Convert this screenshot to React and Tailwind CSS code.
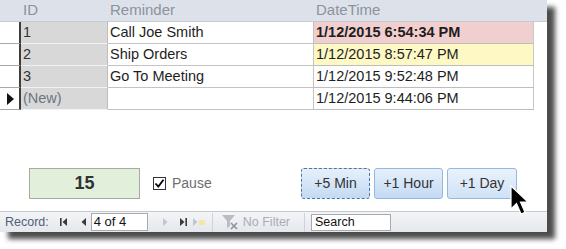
import React from 'react';

const rows = [
  { id: '1', text: 'Call Joe Smith', date: '1/12/2015 6:54:34 PM', tone: 'bg-[#f2cfcf] font-bold' },
  { id: '2', text: 'Ship Orders', date: '1/12/2015 8:57:47 PM', tone: 'bg-[#fdf8c4]' },
  { id: '3', text: 'Go To Meeting', date: '1/12/2015 9:52:48 PM', tone: 'bg-white' },
  { id: '(New)', text: '', date: '1/12/2015 9:44:06 PM', tone: 'bg-white', isNew: true },
];

const NavIcon = ({ d, color = '#3a3a3a' }) => (
  <svg width="10" height="10" viewBox="0 0 10 10">
    <path d={d} fill={color} />
  </svg>
);

const App = () => {
  return (
    <div className="w-[566px] h-[249px] bg-white relative overflow-hidden" style={{ fontFamily: '"Liberation Sans", Arial, sans-serif' }}>
      <div className="w-[547px] h-[232px] bg-white flex flex-col shadow-[8px_7px_5px_rgba(0,0,0,0.7)]">
        {/* datasheet */}
        <div className="flex flex-col">
          <div className="h-[22px] bg-[#dde2ea] border-b border-[#c6cad1] flex text-[15px] text-[#8c939c] items-center">
            <div className="w-[21px]" />
            <div className="w-[87px] pl-[2px]">ID</div>
            <div className="w-[206px] pl-[2px]">Reminder</div>
            <div className="w-[220px] pl-[2px]">DateTime</div>
          </div>
          {rows.map((r) => (
            <div key={r.id} className="h-[22px] flex text-[14.5px] text-[#1e1e1e]">
              <div className="w-[21px] bg-white border-r-2 border-r-[#3c3c3c] border-b border-b-[#a9a9a9] flex items-center justify-center">
                {r.isNew && (
                  <svg width="8" height="12" viewBox="0 0 8 12">
                    <path d="M1 0 L8 6 L1 12 Z" fill="#111" />
                  </svg>
                )}
              </div>
              <div className={`w-[87px] bg-[#d8d8d8] border-b border-[#f2f2f2] border-r border-r-[#bdbdbd] pl-[2px] flex items-center ${r.isNew ? 'text-[#6b7584]' : 'text-[#333]'}`}>
                {r.id}
              </div>
              <div className="w-[206px] bg-white border-b border-[#c4c4c4] border-r border-r-[#c4c4c4] pl-[2px] flex items-center">
                {r.text}
              </div>
              <div className={`w-[220px] ${r.tone} border-b border-[#bdbdbd] border-r border-r-[#c8c8c8] pl-[2px] flex items-center`}>
                {r.date}
              </div>
            </div>
          ))}
        </div>

        {/* controls */}
        <div className="mt-[58px] h-[31px] flex items-stretch">
          <div className="w-[301px] flex items-center">
            <div className="ml-[29px] w-[111px] h-[31px] bg-[#e2efda] border border-[#a6aaa3] flex items-center justify-center text-[18px] font-bold text-[#333]">
              15
            </div>
            <div className="ml-[13px] w-[13px] h-[13px] border border-[#333] bg-white flex items-center justify-center">
              <svg width="11" height="11" viewBox="0 0 11 11">
                <path d="M1.5 5.5 L4.3 8.5 L9.5 1.8" stroke="#000" strokeWidth="1.8" fill="none" />
              </svg>
            </div>
            <span className="ml-[6px] text-[14px] text-[#6e6e6e]">Pause</span>
          </div>
          <div className="flex gap-[4px]">
            <button className="w-[69px] h-[31px] rounded-[3px] border border-dashed border-[#4c74a8] bg-gradient-to-b from-[#e6f0fb] to-[#c3daf3] text-[14px] text-[#333]">
              +5 Min
            </button>
            <button className="w-[69px] h-[31px] rounded-[3px] border border-[#95b8e0] bg-gradient-to-b from-[#e6f0fb] to-[#c3daf3] text-[14px] text-[#333]">
              +1 Hour
            </button>
            <button className="w-[70px] h-[31px] rounded-[3px] border border-[#95b8e0] bg-gradient-to-b from-[#eaf2fc] to-[#cfe2f6] text-[14px] text-[#333]">
              +1 Day
            </button>
          </div>
        </div>

        {/* record navigation */}
        <div className="mt-[12px] h-[21px] bg-gradient-to-b from-[#f4f5f7] to-[#e4e7ec] border-t border-[#c5c9cf] flex items-center text-[12.5px]">
          <span className="ml-[5px] text-[#50607a]">Record:</span>
          <div className="ml-[10px] flex items-center">
            <svg width="10" height="10" viewBox="0 0 10 10">
              <rect x="1" y="1" width="1.6" height="8" fill="#3a3a3a" />
              <path d="M8 1 L3.5 5 L8 9 Z" fill="#3a3a3a" />
            </svg>
          </div>
          <div className="ml-[10px]"><NavIcon d="M7 1 L2.5 5 L7 9 Z" /></div>
          <div className="ml-[2px] w-[57px] h-[18px] bg-white border border-[#a7abb0] flex items-center pl-[2px] text-[13px] text-[#111]">
            4 of 4
          </div>
          <div className="ml-[12px]"><NavIcon d="M3 1 L7.5 5 L3 9 Z" color="#c2c6cc" /></div>
          <div className="ml-[8px] flex items-center">
            <svg width="10" height="10" viewBox="0 0 10 10">
              <path d="M2 1 L6.5 5 L2 9 Z" fill="#3a3a3a" />
              <rect x="7.4" y="1" width="1.6" height="8" fill="#3a3a3a" />
            </svg>
          </div>
          <div className="ml-[4px] flex items-center">
            <svg width="14" height="10" viewBox="0 0 14 10">
              <path d="M1 1 L5.5 5 L1 9 Z" fill="#c2c6cc" />
              <rect x="7" y="3" width="6" height="5" fill="#f3e7a8" />
            </svg>
          </div>
          <div className="ml-[6px] w-px h-[19px] bg-[#cfd2d7]" />
          <div className="ml-[8px] flex items-center">
            <svg width="18" height="16" viewBox="0 0 18 16">
              <path d="M1 1 H14 L9 7 V12 L6 14 V7 Z" fill="#b9bdc3" />
              <path d="M10 9 L16 15 M16 9 L10 15" stroke="#8d9197" strokeWidth="1.5" />
            </svg>
          </div>
          <span className="ml-[4px] text-[#a9adb3]">No Filter</span>
          <div className="ml-[14px] w-px h-[19px] bg-[#cfd2d7]" />
          <div className="ml-[6px] w-[80px] h-[17px] bg-white border border-[#a7abb0] flex items-center pl-[3px] text-[12.5px] text-[#111]">
            Search
          </div>
        </div>
      </div>

      {/* mouse cursor */}
      <svg className="absolute left-[510px] top-[185px]" width="22" height="32" viewBox="0 0 22 32">
        <path d="M1 1 L1 24 L6.5 18.5 L11 29 L15 27.3 L10.5 17 L18 17 Z" fill="#000" stroke="#fff" strokeWidth="1.2" />
      </svg>
    </div>
  );
};

export default App;
